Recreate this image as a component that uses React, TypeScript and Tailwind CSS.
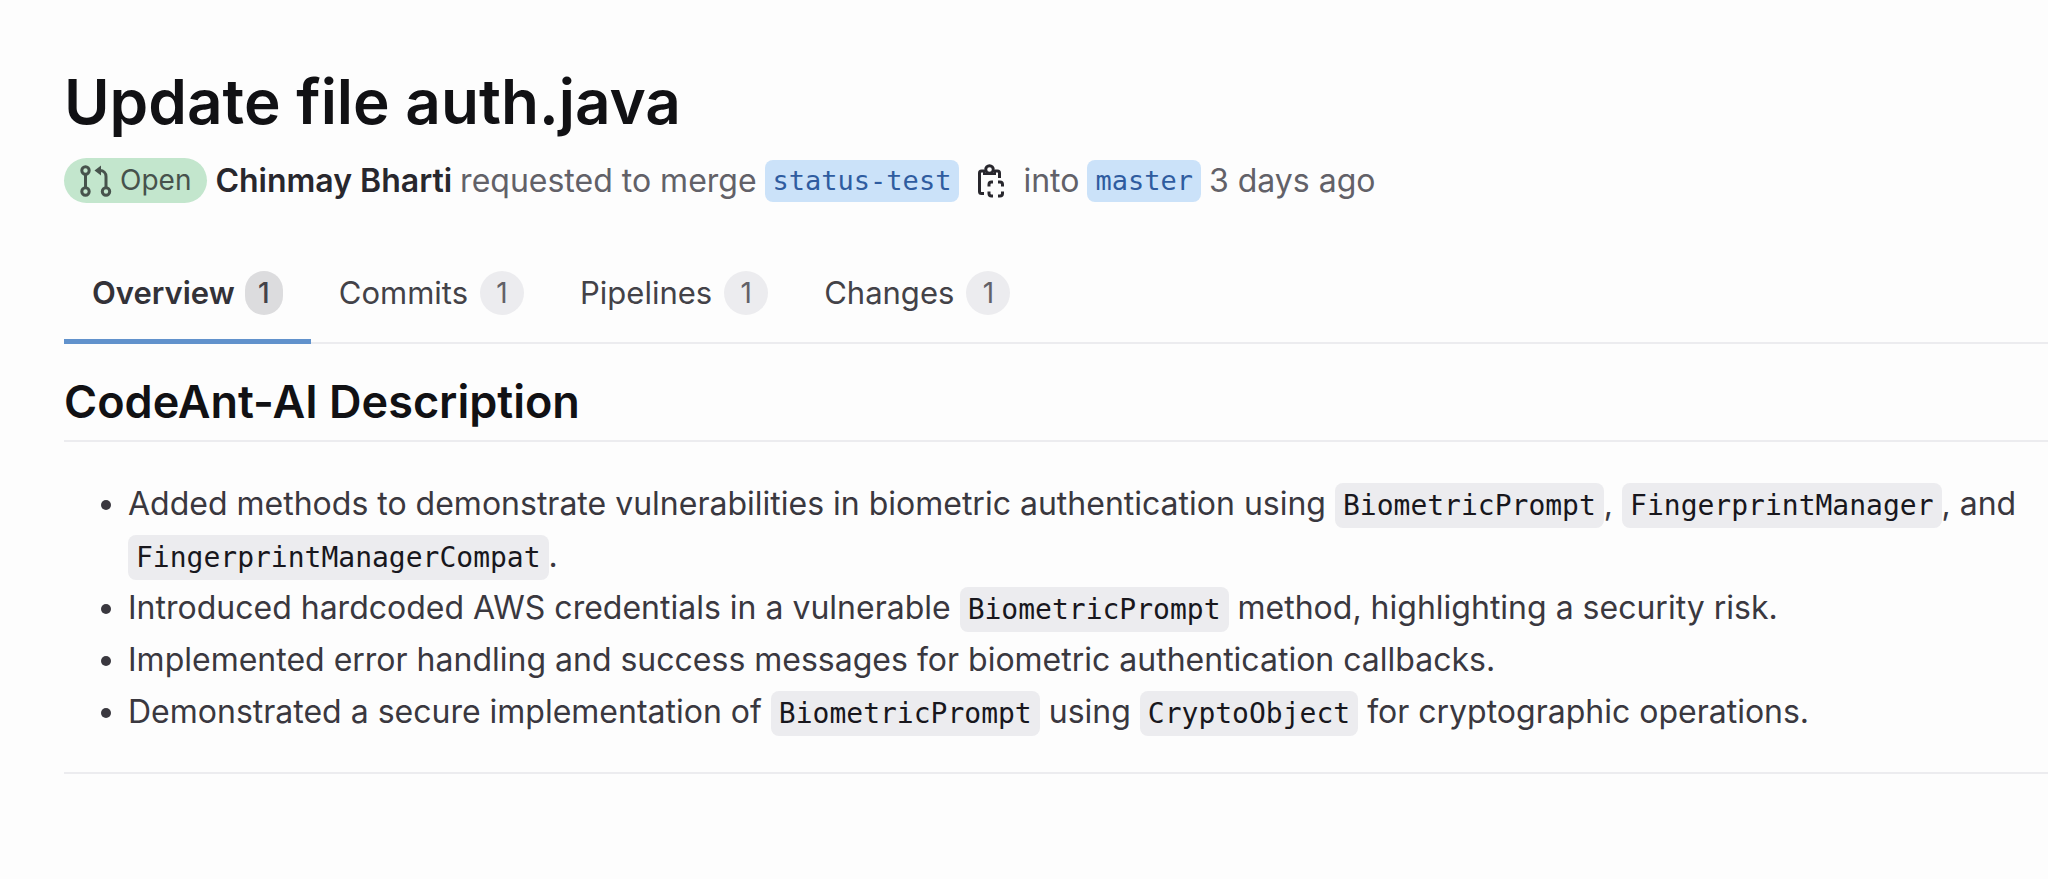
import { useState } from "react";
import type { ReactNode } from "react";

const tabs = [
  { id: "overview", label: "Overview", count: 1 },
  { id: "commits", label: "Commits", count: 1 },
  { id: "pipelines", label: "Pipelines", count: 1 },
  { id: "changes", label: "Changes", count: 1 },
];

function MergeRequestIcon() {
  return (
    <svg
      viewBox="0 0 32 32"
      className="h-8 w-8"
      fill="none"
      stroke="currentColor"
      strokeWidth="3"
      aria-hidden="true"
    >
      <circle cx="5.5" cy="5.5" r="3.7" />
      <circle cx="5.5" cy="26.5" r="3.7" />
      <circle cx="26" cy="26.5" r="3.7" />
      <path d="M5.5 9.5v13M26 22.5V11.5c0-3.5-2.5-6-6-6h-2" />
      <path d="M21 0.5v10L14.5 5.5z" fill="currentColor" stroke="none" />
    </svg>
  );
}

function CopyIcon() {
  return (
    <svg
      viewBox="0 0 28 36"
      className="h-9 w-7"
      fill="none"
      stroke="currentColor"
      strokeWidth="3"
      aria-hidden="true"
    >
      <path d="M7 8H4.5Q2.5 8 2.5 10v18.5q0 2 2 2H7M18 8h2.5q2 0 2 2v5" />
      <circle cx="12.5" cy="6.5" r="3.8" />
      <path d="M7 7v4h11V7" strokeWidth="2" />
      <path d="M12 23.5v-2q0-2.5 2.5-2.5h1.5M21 19h2q2.5 0 2.5 2.5v2M25.5 28.5v2q0 2.5-2.5 2.5h-2M16 33h-1.5q-2.5 0-2.5-2.5v-2" />
    </svg>
  );
}

function Branch({ children }: { children: ReactNode }) {
  return (
    <a
      href="#"
      className="rounded-lg bg-[#cbe2f9] px-2 font-['DejaVu_Sans_Mono',monospace] text-[27px] leading-[42px] text-[#2f5ca0]"
    >
      {children}
    </a>
  );
}

function Code({ children }: { children: ReactNode }) {
  return (
    <code className="rounded-lg bg-[#ececef] px-2 py-[6px] font-['DejaVu_Sans_Mono',monospace] text-[28px] leading-none text-[#18171d]">
      {children}
    </code>
  );
}

export default function App() {
  const [activeTab, setActiveTab] = useState("overview");

  return (
    <main className="min-h-screen bg-[#fdfdfd] pt-[60px] pl-16 font-[Inter,sans-serif] text-[32px] text-[#3a383f]">
      <h1 className="text-[62px] leading-[84px] font-semibold text-[#111114]">
        Update file auth.java
      </h1>

      <div className="mt-[14px] flex flex-wrap items-center gap-x-2 leading-[45px] text-[#626168]">
        <span className="flex items-center gap-2 rounded-full bg-[#c3e6cd] px-4 text-[28px] leading-[45px] text-[#47524c]">
          <MergeRequestIcon />
          Open
        </span>
        <a href="#" className="font-semibold text-[#28272d]">
          Chinmay Bharti
        </a>
        <span>requested to merge</span>
        <Branch>status-test</Branch>
        <button
          type="button"
          aria-label="Copy branch name"
          className="mx-[10px] text-[#28272d]"
        >
          <CopyIcon />
        </button>
        <span>into</span>
        <Branch>master</Branch>
        <time>3 days ago</time>
      </div>

      {/* Tabs */}
      <nav className="mt-[42px] flex border-b-2 border-[#ececef] text-[31px] leading-[44px]">
        {tabs.map((tab) => {
          const active = tab.id === activeTab;
          return (
            <button
              key={tab.id}
              type="button"
              onClick={() => setActiveTab(tab.id)}
              className={
                active
                  ? "-mb-[2px] flex items-center gap-[10px] border-b-[5px] border-[#6192cc] px-7 pt-[26px] pb-6 font-semibold text-[#333238]"
                  : "-mb-[2px] flex items-center gap-3 border-b-[5px] border-transparent px-7 pt-[26px] pb-6 text-[#434248]"
              }
            >
              {tab.label}
              <span
                className={
                  active
                    ? "h-11 w-[38px] rounded-full bg-[#dcdcde] text-[28px] font-medium text-[#434248]"
                    : "h-11 w-11 rounded-full bg-[#ececef] text-[28px] font-normal text-[#626168]"
                }
              >
                {tab.count}
              </span>
            </button>
          );
        })}
      </nav>

      {/* Description */}
      <section className="border-b-2 border-[#ececef] pb-[34px]">
        <h2 className="border-b-2 border-[#ececef] pt-7 pb-2 text-[45px] leading-[60px] font-semibold text-[#111114]">
          CodeAnt-AI Description
        </h2>
        <ul className="mt-9 list-disc pl-16 leading-[52px]">
          <li>
            Added methods to demonstrate vulnerabilities in biometric
            authentication using <Code>BiometricPrompt</Code>,{" "}
            <Code>FingerprintManager</Code>, and{" "}
            <Code>FingerprintManagerCompat</Code>.
          </li>
          <li>
            Introduced hardcoded AWS credentials in a vulnerable{" "}
            <Code>BiometricPrompt</Code> method, highlighting a security risk.
          </li>
          <li>
            Implemented error handling and success messages for biometric
            authentication callbacks.
          </li>
          <li>
            Demonstrated a secure implementation of{" "}
            <Code>BiometricPrompt</Code> using <Code>CryptoObject</Code> for
            cryptographic operations.
          </li>
        </ul>
      </section>
    </main>
  );
}
